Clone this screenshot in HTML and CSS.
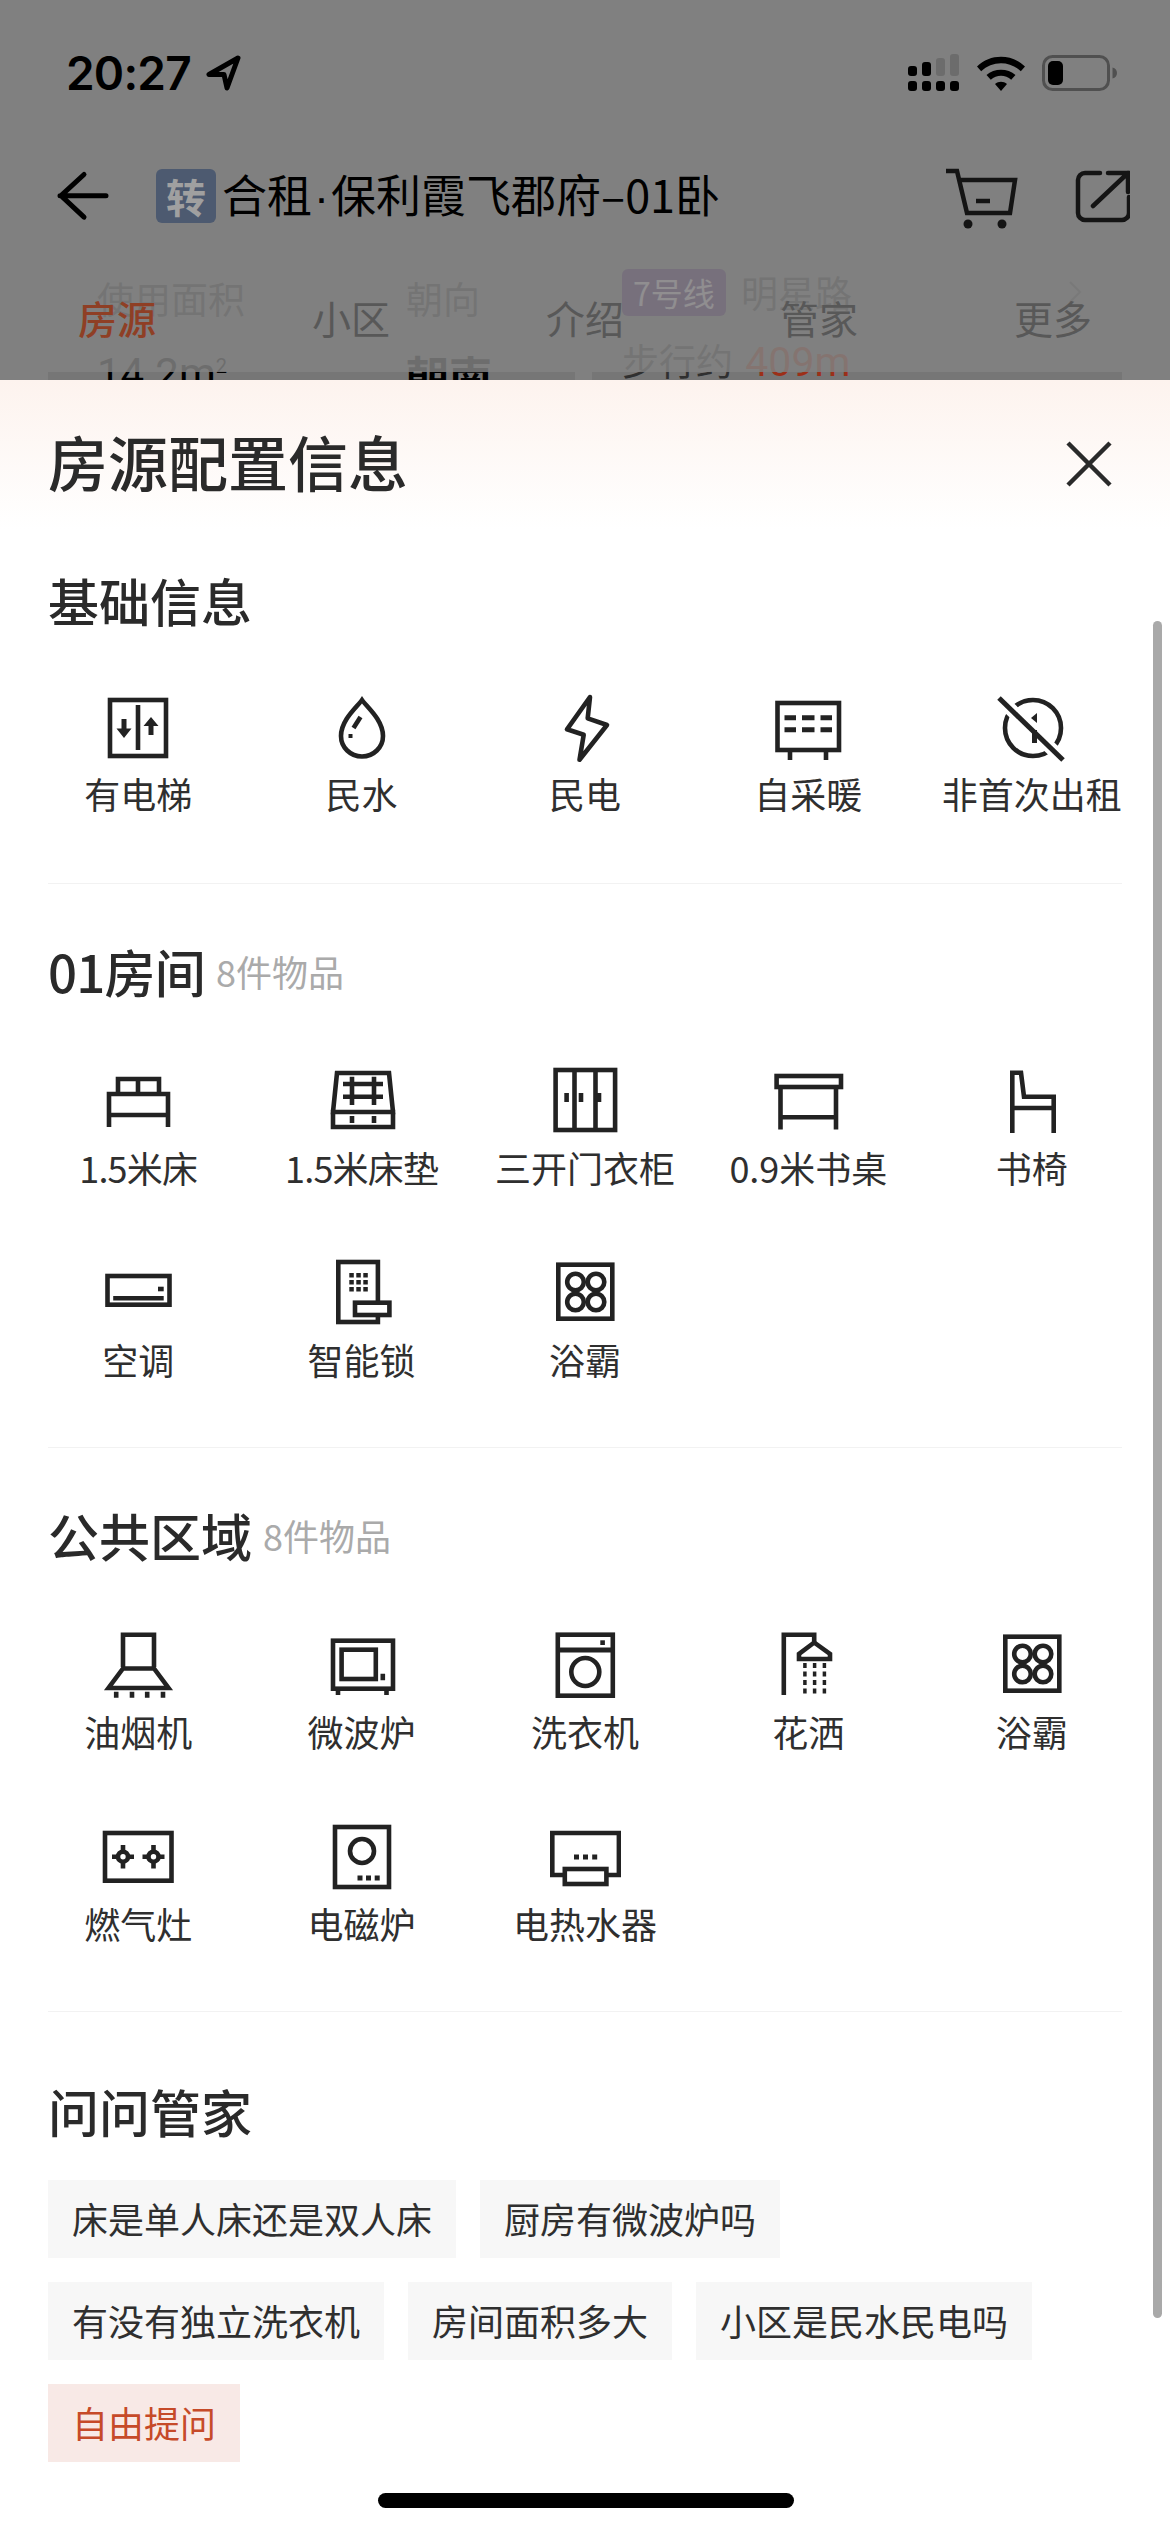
FILE: index.html
```html
<!DOCTYPE html>
<html lang="zh-CN">
<head>
<meta charset="utf-8">
<title>房源配置信息</title>
<link rel="stylesheet" href="styles.css">
</head>
<body>
<svg class="defs" width="0" height="0">
  <symbol id="i-bath" viewBox="0 0 72 72">
    <rect x="9.3" y="9.7" width="54" height="54"/>
    <circle cx="26.5" cy="27" r="8.3"/><circle cx="47" cy="27" r="8.3"/>
    <circle cx="26.5" cy="47" r="8.3"/><circle cx="47" cy="47" r="8.3"/>
  </symbol>
</svg>
<div class="screen">
  <header class="top">
    <div class="behind">
      <div class="card card-a">
        <div class="fact"><div class="fact-label">使用面积</div><div class="fact-value thin">14.2m<sup>2</sup></div></div>
        <div class="fact"><div class="fact-label">朝向</div><div class="fact-value strong">朝南</div></div>
      </div>
      <div class="card card-b">
        <div class="metro-line"><span class="metro-tag">7号线</span><span class="fact-label">明星路</span></div>
        <div class="metro-walk">步行约 <span class="metro-dist">409m</span></div>
        <svg class="metro-chev" viewBox="0 0 14 24"><path d="M2 2l10 10L2 22"/></svg>
      </div>
    </div>
    <div class="status">
      <div class="status-left">
        <span class="time">20:27</span>
        <svg class="loc" viewBox="0 0 36 36"><path d="M33 3L4 19.5h15L22 33z"/></svg>
      </div>
      <div class="status-right">
        <svg class="signal" width="52" height="38" viewBox="0 0 52 38">
          <rect class="dim" x="29" y="4" width="9" height="18" rx="3"/><rect class="dim" x="43" y="0" width="9" height="22" rx="3"/>
          <rect x="1" y="12" width="9" height="10" rx="3"/><rect x="15" y="8" width="9" height="14" rx="3"/>
          <rect x="1" y="27" width="9" height="10" rx="3"/><rect x="15" y="27" width="9" height="10" rx="3"/><rect x="29" y="27" width="9" height="10" rx="3"/><rect x="43" y="27" width="9" height="10" rx="3"/>
        </svg>
        <svg class="wifi" width="48" height="36" viewBox="0 0 48 36">
          <path d="M0 11.5C13 -1.5 35 -1.5 48 11.5l-4.200 4.700C33 5.500 15 5.500 4.200 16.200z"/>
          <path d="M9.500 20C17 13 31 13 38.500 20l-4.300 4.700C28.500 19.500 19.500 19.500 13.800 24.700z"/>
          <path d="M18 29c3.500-3 8.500-3 12 0l-6 7z"/>
        </svg>
        <svg class="batt" width="76" height="36" viewBox="0 0 76 36">
          <rect class="batt-shell" x="1.500" y="1.500" width="65" height="33" rx="9"/>
          <rect x="6" y="6" width="15" height="24" rx="5"/>
          <path class="dim-batt" d="M70.500 12.500c3 .8 4.500 3 4.500 5.500s-1.500 4.700-4.500 5.500z"/>
        </svg>
      </div>
    </div>
    <nav class="navbar">
      <svg class="back" viewBox="0 0 56 56"><path d="M5 27.700H51M29 6.500L6 27.700l23 21.500"/></svg>
      <span class="tag-zhuan">转</span>
      <h1 class="nav-title">合租<span class="mid-dot">·</span>保利霞飞郡府–01卧</h1>
      <svg class="cart" viewBox="0 0 76 66"><path d="M3 3h11l10 42h43l5-33H17M33 33h14"/><circle cx="25" cy="56" r="4.500"/><circle cx="59" cy="56" r="4.500"/></svg>
      <svg class="share" viewBox="0 0 56 56"><path d="M26 5H11a7 7 0 0 0-7 7v33a7 7 0 0 0 7 7h37a7 7 0 0 0 7-7V29M19 38L54 5M34 5h20v19"/></svg>
    </nav>
    <div class="tabs">
      <span class="tab tab-on">房源</span><span class="tab">小区</span><span class="tab">介绍</span><span class="tab">管家</span><span class="tab">更多</span>
    </div>
  </header>

  <main class="sheet">
    <div class="sheet-head">
      <h2 class="sheet-title">房源配置信息</h2>
      <svg class="close" viewBox="0 0 46 46"><path d="M2 2l42 42M44 2L2 44"/></svg>
    </div>

    <section class="group group-base">
      <h3 class="group-head"><span>基础信息</span></h3>
      <div class="items">
        <div class="item"><svg class="ic" viewBox="0 0 72 72"><rect x="8" y="8" width="56" height="56"/><path d="M36 13v45"/><path class="f" d="M19.500 27h5v9.500h5L22 46l-7.500-9.500h5zM46.500 43v-9h-5L49 25l7.500 9h-5v9z"/></svg><span class="item-label">有电梯</span></div>
        <div class="item"><svg class="ic" viewBox="0 0 72 72"><path d="M36 8C31 15 15 28 15 44a21 20.500 0 0 0 42 0C57 28 41 15 36 8z"/><path d="M34.500 25l-7 11"/><rect class="f" x="22.500" y="42" width="4" height="4"/></svg><span class="item-label">民水</span></div>
        <div class="item"><svg class="ic" viewBox="0 0 72 72"><path class="jn" d="M41 5L18 37.300l16.700 5.500-4.200 25L58 33l-19.300-6.700z"/></svg><span class="item-label">民电</span></div>
        <div class="item"><svg class="ic" viewBox="0 0 72 72"><rect x="5.500" y="11" width="61.500" height="47"/><path d="M18 59v9M54 59v9"/><path class="w5" d="M12.500 25.700H24M30 25.700h12.500M48.500 25.700H60M12.500 37.700H24M30 37.700h12.500M48.500 37.700H60"/></svg><span class="item-label">自采暖</span></div>
        <div class="item"><svg class="ic" viewBox="0 0 72 72"><circle cx="37" cy="36" r="28"/><path class="knock" d="M3 6l64 62"/><path class="w5" d="M3 6l64 62"/><path class="f" d="M41 21v10l-6-5z"/><rect class="f" x="36" y="38" width="5" height="13"/></svg><span class="item-label">非首次出租</span></div>
      </div>
    </section>

    <section class="group">
      <h3 class="group-head"><span class="tight">01房间</span><small>8件物品</small></h3>
      <div class="items">
        <div class="item"><svg class="ic" viewBox="0 0 72 72"><path d="M16 30V16h41v14M36 16v14M7 64V31h59v33M7 52h59"/></svg><span class="item-label tight">1.5米床</span></div>
        <div class="item"><svg class="ic" viewBox="0 0 72 72"><path d="M7 49l4-39h52l4 39zM7 49h60v15H7z"/><path d="M17 21h40M17 33.700h40M26 13.700V42M48 13.700V42M26 53v7M48 53v7"/></svg><span class="item-label tight">1.5米床垫</span></div>
        <div class="item"><svg class="ic" viewBox="0 0 72 72"><rect x="6.600" y="7" width="59.500" height="60"/><path d="M25.500 7v60M46.500 7v60M17.600 30v9M32 30v9M50 30v9"/></svg><span class="item-label">三开门衣柜</span></div>
        <div class="item"><svg class="ic" viewBox="0 0 72 72"><rect x="4.600" y="13" width="64.400" height="11"/><path d="M8.500 24v42.500M64 24v42.500M8.500 54.300H64"/></svg><span class="item-label">0.9米书桌</span></div>
        <div class="item"><svg class="ic" viewBox="0 0 72 72"><path d="M16.300 70V9.700H25l3 24h29.700V70M16.300 45h41.400"/></svg><span class="item-label">书椅</span></div>
        <div class="item"><svg class="ic" viewBox="0 0 72 72"><rect x="5.500" y="21" width="62" height="28.700"/><path d="M11.200 43.200h50.500"/><rect class="f" x="56" y="31.700" width="5.700" height="4.600"/></svg><span class="item-label">空调</span></div>
        <div class="item"><svg class="ic" viewBox="0 0 72 72"><rect x="12.300" y="7" width="39.600" height="60"/><rect class="wf" x="29" y="47.700" width="34.400" height="12.300"/><path class="dots" d="M23.300 20.300H42M23.300 27.300H42M23.300 34.300H42"/></svg><span class="item-label">智能锁</span></div>
        <div class="item"><svg class="ic"><use href="#i-bath"/></svg><span class="item-label">浴霸</span></div>
      </div>
    </section>

    <section class="group">
      <h3 class="group-head"><span>公共区域</span><small>8件物品</small></h3>
      <div class="items">
        <div class="item"><svg class="ic" viewBox="0 0 72 72"><path d="M21 40V7.700h31V40"/><path d="M21 41.500h31l14.500 19.500H6.500z"/><path d="M14.200 64.700v6M30 64.700v6M45.200 64.700v6M61 64.700v6"/></svg><span class="item-label">油烟机</span></div>
        <div class="item"><svg class="ic" viewBox="0 0 72 72"><rect x="7" y="13.700" width="60" height="48"/><rect x="15.600" y="22.700" width="34.200" height="29.300"/><path d="M56.800 46.700v6.600M12 62v6M60.500 62v6"/></svg><span class="item-label">微波炉</span></div>
        <div class="item"><svg class="ic" viewBox="0 0 72 72"><rect x="8.800" y="7.700" width="55" height="61"/><path class="w5" d="M8.800 23h55"/><path d="M53.600 13.300V18"/><circle cx="36.300" cy="45" r="14"/></svg><span class="item-label">洗衣机</span></div>
        <div class="item"><svg class="ic" viewBox="0 0 72 72"><path d="M11.800 68V7.700H42.200V16"/><path d="M42.200 15.500L27 27v5h31v-5z"/><path class="drops" d="M32.900 36v32M42.600 36v32M52.400 36v32"/></svg><span class="item-label">花洒</span></div>
        <div class="item"><svg class="ic"><use href="#i-bath"/></svg><span class="item-label">浴霸</span></div>
        <div class="item"><svg class="ic" viewBox="0 0 72 72"><rect x="3" y="14" width="66.500" height="47.700"/><circle cx="21" cy="37.700" r="5"/><circle cx="51.500" cy="37.700" r="5"/><path d="M10 37.700h6M26 37.700h6M21 26v6.700M21 42.700v6.700M40.500 37.700h6M56.500 37.700h6M51.500 26v6.700M51.500 42.700v6.700"/></svg><span class="item-label">燃气灶</span></div>
        <div class="item"><svg class="ic" viewBox="0 0 72 72"><rect x="9" y="8" width="54" height="60"/><circle cx="36" cy="32" r="12"/><path class="w5" d="M31.500 59h5M40 59h5M48.700 59h5"/></svg><span class="item-label">电磁炉</span></div>
        <div class="item"><svg class="ic" viewBox="0 0 72 72"><path d="M14 56H3.300V14h66.600v42H59"/><rect x="15.800" y="50" width="41.600" height="15"/><path class="w5" d="M25 38h5M34 38h5M43.200 38h5"/></svg><span class="item-label">电热水器</span></div>
      </div>
    </section>

    <section class="group group-ask">
      <h3 class="group-head"><span>问问管家</span></h3>
      <div class="chips">
        <span class="chip">床是单人床还是双人床</span>
        <span class="chip">厨房有微波炉吗</span>
        <span class="chip">有没有独立洗衣机</span>
        <span class="chip">房间面积多大</span>
        <span class="chip">小区是民水民电吗</span>
        <span class="chip chip-free">自由提问</span>
      </div>
    </section>

    <div class="scrollbar"></div>
    <div class="home-bar"></div>
  </main>
</div>
</body>
</html>
```
FILE: styles.css
```css
* { box-sizing: border-box; }
html, body { margin: 0; padding: 0; background: #fff; }
body {
  width: 1170px;
  height: 2532px;
  overflow: hidden;
  font-family: "Noto Sans CJK SC", "Noto Sans", sans-serif;
  color: #2b2b2b;
}
h1, h2, h3 { margin: 0; font-weight: 400; }
.defs { position: absolute; }
.screen { display: flex; flex-direction: column; width: 1170px; height: 2532px; }
.tight { letter-spacing: -.8px; }

/* dimmed page behind the sheet */
.top { position: relative; height: 380px; flex: none; overflow: hidden; background: #808080; }
.behind { position: absolute; top: 262px; left: 48px; right: 48px; height: 200px; display: flex; gap: 17px; }
.card { background: linear-gradient(transparent 110px, #767676 110px); height: 200px; position: relative; flex: none; }
.card-a { width: 527px; display: flex; padding: 11px 0 0 49px; }
.card-b { width: 530px; padding: 6px 0 0 30px; }
.fact { flex: none; width: 309px; }
.fact-label { font-size: 37px; line-height: 50px; color: #303030; }
.fact-value { margin-top: 23px; line-height: 56px; color: #000; }
.fact-value.thin { font-family: "Roboto", sans-serif; font-size: 42px; }
.fact-value sup { font-size: 20px; line-height: 0; }
.fact-value.strong { font-size: 43px; font-weight: 700; }
.metro-line { display: flex; align-items: center; gap: 15px; height: 48px; }
.metro-tag { width: 104px; height: 47px; border-radius: 6px; background: #441a64; color: #e6dcea; font-size: 32px; line-height: 47px; text-align: center; }
.metro-walk { margin-top: 19px; font-size: 37px; line-height: 50px; color: #303030; }
.metro-dist { font-family: "Roboto", sans-serif; font-size: 41px; color: #9c2f18; margin-left: 4px; }
.metro-chev { position: absolute; right: 40px; top: 18px; width: 14px; height: 24px; fill: none; stroke: #555; stroke-width: 2; }

.status { position: relative; display: flex; justify-content: space-between; align-items: center; height: 130px; padding: 16px 52px 0 66px; }
.status-left { display: flex; align-items: center; gap: 14px; }
.time { font-family: "Inter", "Liberation Sans", sans-serif; font-size: 46px; font-weight: 600; letter-spacing: -.8px; line-height: 50px; color: #000; }
.loc { width: 36px; height: 36px; fill: none; stroke: #000; stroke-width: 5; stroke-linejoin: round; }
.status-right { display: flex; align-items: center; }
.signal { fill: #000; margin-right: 18px; }
.signal .dim { fill: #6c6c6c; }
.wifi { fill: #000; margin-right: 17px; }
.batt { fill: #000; }
.batt-shell { fill: none; stroke: #505050; stroke-width: 3; }
.dim-batt { fill: #505050; }

.navbar { position: relative; display: flex; align-items: center; height: 132px; padding: 0 40px 0 55px; }
.back { width: 56px; height: 56px; flex: none; fill: none; stroke: #000; stroke-width: 5; stroke-linecap: round; stroke-linejoin: round; }
.tag-zhuan { flex: none; margin-left: 45px; width: 60px; height: 54px; border-radius: 6px; background: #4d5a70; color: #a0a0a0; font-size: 40px; font-weight: 700; line-height: 54px; text-align: center; }
.nav-title { flex: 1; margin-left: 6px; font-size: 45px; line-height: 60px; color: #000; white-space: nowrap; }
.mid-dot { font-family: "Liberation Sans", sans-serif; margin: 0 2px; }
.cart { flex: none; width: 76px; height: 66px; fill: none; stroke: #141414; stroke-width: 4.500; margin-top: 10px; }
.cart circle { fill: #141414; stroke: none; }
.share { flex: none; width: 56px; height: 56px; margin-left: 55px; fill: none; stroke: #141414; stroke-width: 4.500; stroke-linecap: round; }

.tabs { position: relative; display: flex; height: 110px; background: rgba(128, 128, 128, .85); }
.tab { flex: 1; text-align: center; font-size: 39px; line-height: 110px; color: #585858; }
.tab-on { color: #8f3f25; font-weight: 500; }

/* sheet */
.sheet { position: relative; flex: 1; padding: 0 48px; background: linear-gradient(#fdf3ee 0, #fff 150px); overflow: hidden; }
.sheet-head { display: flex; justify-content: space-between; align-items: center; height: 172px; padding: 0 10px 10px 0; }
.sheet-title { font-size: 60px; line-height: 74px; font-weight: 500; color: #2a2a2a; }
.close { width: 46px; height: 46px; margin-top: 6px; fill: none; stroke: #2a2a2a; stroke-width: 4.500; }

.group { padding: 39px 0 64px; border-top: 1px solid #f2f2f2; }
.group-base { padding: 0 0 66px; border-top: 0; }
.group-head { display: flex; align-items: center; gap: 11px; height: 100px; padding-bottom: 5px; line-height: 90px; font-size: 51px; font-weight: 500; color: #2a2a2a; }
.group-head small { font-size: 36px; font-weight: 400; color: #aaa; }

.items { display: grid; grid-template-columns: repeat(5, 223.400px); row-gap: 64px; margin: 40px -22px 0 -21.500px; }
.item { display: flex; flex-direction: column; align-items: center; gap: 8px; }
.group-base .item { gap: 5px; }
.ic { display: block; width: 72px; height: 72px; fill: none; stroke: #222; stroke-width: 4.600; }
.ic .f { fill: #222; stroke: none; }
.ic .wf { fill: #fff; }
.ic .w5 { stroke-width: 5; }
.ic .jn { stroke-linejoin: round; }
.ic .knock { stroke: #fff; stroke-width: 13; }
.ic .dots { stroke-dasharray: 4.500 2.500; stroke-width: 4.500; }
.ic .drops { stroke-width: 3.500; stroke-dasharray: 5 3.500; }
.item-label { font-size: 36px; line-height: 48px; color: #2f2f2f; white-space: nowrap; }

.group-ask { padding: 52px 0 0; }
.group-ask .group-head { height: 97px; padding-bottom: 3px; }
.chips { display: flex; flex-wrap: wrap; gap: 24px; margin-top: 19px; }
.chip { height: 78px; padding: 0 24px; background: #f7f7f7; font-size: 36px; line-height: 76px; color: #2f2f2f; white-space: nowrap; }
.chip-free { background: #f8e9e6; color: #c64a29; }

.scrollbar { position: absolute; top: 241px; right: 8px; width: 9px; height: 1697px; border-radius: 5px; background: #a9a9a9; }
.home-bar { position: absolute; bottom: 24px; left: 378px; width: 416px; height: 15px; border-radius: 8px; background: #000; }
```
